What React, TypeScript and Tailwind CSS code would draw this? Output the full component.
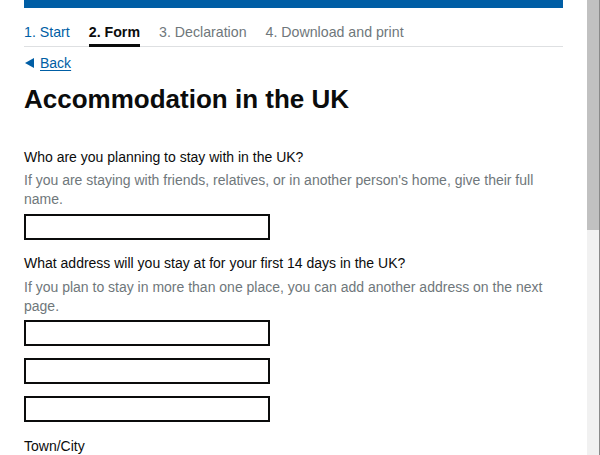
const font = { fontFamily: '"Liberation Sans", Arial, sans-serif' };

function TextInput() {
  return <div className="h-[26px] w-[246px] border-2 border-[#0b0c0c] bg-white" />;
}

export default function App() {
  const steps = [
    { label: '1. Start', className: 'text-[#005ea5] border-transparent' },
    { label: '2. Form', className: 'text-[#0b0c0c] font-bold border-[#0b0c0c]' },
    { label: '3. Declaration', className: 'text-[#6f777b] border-transparent' },
    { label: '4. Download and print', className: 'text-[#6f777b] border-transparent' },
  ];

  return (
    <div className="flex h-[455px] w-[600px] overflow-hidden bg-white" style={font}>
      <div className="flex flex-1 flex-col">
        <div className="h-[2px] bg-black" />
        <div className="flex flex-col px-[24px] text-[#0b0c0c]">
          <div className="h-[8px] bg-[#005ea5]" />

          {/* step nav */}
          <ul className="mt-[14px] flex gap-[19px] border-b border-[#dee0e2]">
            {steps.map((s) => (
              <li
                key={s.label}
                className={`-mb-px border-b-[3px] pb-[2px] text-[14.2px] leading-[20px] ${s.className}`}
              >
                {s.label}
              </li>
            ))}
          </ul>

          <a href="#" className="mt-[6px] flex items-center gap-[6px] text-[14px] leading-[20px] text-[#005ea5]">
            <svg width="9" height="10" viewBox="0 0 9 10" className="ml-[1px]">
              <polygon points="9,0 9,10 0,5" fill="#005ea5" />
            </svg>
            <span className="underline underline-offset-[2px]">Back</span>
          </a>

          <h1 className="mt-[11px] text-[26px] font-bold leading-[30px]">
            Accommodation in the UK
          </h1>

          <label className="mt-[33px] text-[14px] leading-[20px]">
            Who are you planning to stay with in the UK?
          </label>
          <p className="mt-[4px] text-[14px] leading-[19px] text-[#6f777b]">
            If you are staying with friends, relatives, or in another person's home, give their full name.
          </p>
          <div className="mt-[5px]">
            <TextInput />
          </div>

          <label className="mt-[13px] text-[14px] leading-[20px]">
            What address will you stay at for your first 14 days in the UK?
          </label>
          <p className="mt-[5px] text-[14px] leading-[19px] text-[#6f777b]">
            If you plan to stay in more than one place, you can add another address on the next page.
          </p>
          <div className="mt-[4px] flex flex-col gap-[12px]">
            <TextInput />
            <TextInput />
            <TextInput />
          </div>

          <label className="mt-[14px] text-[14px] leading-[20px]">Town/City</label>
        </div>
      </div>

      {/* scrollbar */}
      <div className="flex w-[13px] flex-col border-r border-[#8a8a8a] bg-[#f1f1f1]">
        <div className="h-[230px] w-full bg-[#c1c1c1]" />
      </div>
    </div>
  );
}
